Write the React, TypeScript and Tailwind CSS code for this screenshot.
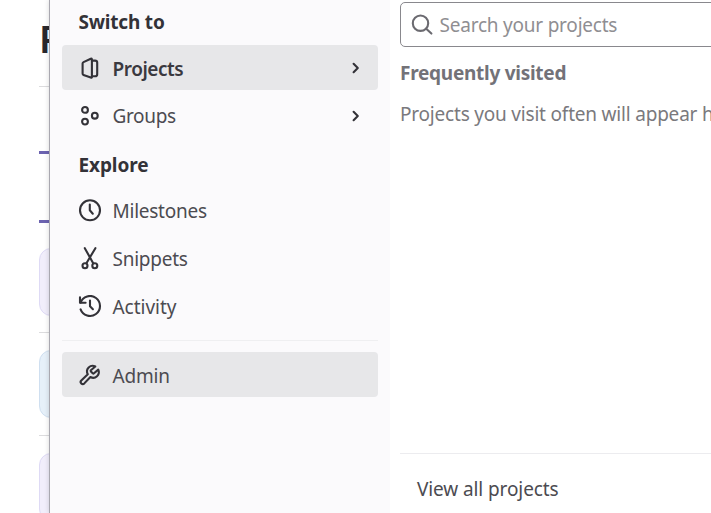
import React from 'react';
import clsx from 'clsx';

interface IconProps {
    children: React.ReactNode;
}

function Icon({ children }: IconProps) {
    return (
        <svg
            viewBox="0 0 24 24"
            className="size-6 shrink-0 text-[#333238]"
            fill="none"
            stroke="currentColor"
            strokeWidth="2.1"
            strokeLinecap="round"
            strokeLinejoin="round"
        >
            {children}
        </svg>
    );
}

const ProjectIcon = () => (
    <Icon>
        <path d="M4.6 7.5Q4.6 6.5 5.5 6.1L12.8 2.7Q13.9 2.3 13.9 3.4V20.9Q13.9 22 12.8 21.6L5.5 18.9Q4.6 18.6 4.6 17.6Z" />
        <path d="M13.9 4.6H17.1Q19.2 4.6 19.2 6.6V18.2Q19.2 20.3 17.1 20.3H13.9" />
    </Icon>
);

const GroupIcon = () => (
    <Icon>
        <circle cx="7" cy="5.9" r="2.9" />
        <circle cx="7" cy="17.6" r="2.9" />
        <circle cx="16.8" cy="11.7" r="2.9" />
    </Icon>
);

const ClockIcon = () => (
    <Icon>
        <circle cx="12" cy="11.3" r="10" />
        <path d="M11.8 5.5V11.3L14.8 14.7" />
    </Icon>
);

const SnippetIcon = () => (
    <Icon>
        <path d="M6.8 1.2L15.2 16.2M17.4 1.2L8.4 16.2" />
        <circle cx="7" cy="18.7" r="2.5" />
        <circle cx="16.8" cy="18.7" r="2.5" />
    </Icon>
);

const HistoryIcon = () => (
    <Icon>
        <path d="M2 2.2V7.8H7.6" />
        <path d="M2.6 7.6A10 10 0 1 1 2.6 14.4" />
        <path d="M12 5.6V11.3L14.9 14.2" />
    </Icon>
);

const AdminIcon = () => (
    <Icon>
        <path d="M12.9 7.2a1 1 0 0 0 0 1.3l1.8 1.8a1 1 0 0 0 1.3 0l4.3-3.7a5.7 5.7 0 0 1-7.9 7.4l-6.1 6.4a2.1 2.1 0 0 1-3-3l6.5-6.2a5.6 5.6 0 0 1 7.5-7.7z" />
    </Icon>
);

interface NavItemProps {
    label: string;
    icon: React.ReactNode;
    highlighted?: boolean;
    bold?: boolean;
    arrow?: boolean;
    className: string;
}

function NavItem({ label, icon, highlighted, bold, arrow, className }: NavItemProps) {
    return (
        <a
            className={clsx(
                'flex h-[45px] shrink-0 items-center rounded pl-4 pr-[14px]',
                highlighted && 'bg-[#e7e7e9]',
                bold ? 'font-semibold text-[#3a393f]' : 'text-[#4c4b51]'
            )}
        >
            {icon}
            <span className={clsx('ml-[10.5px] grow', highlighted ? 'pt-[3px]' : 'pt-px', className)}>{label}</span>
            {arrow && (
                <svg viewBox="0 0 16 16" className="size-4" fill="none" stroke="#333238" strokeWidth="2.1" strokeLinecap="round" strokeLinejoin="round">
                    <path d="M5.6 3.8L9.8 8L5.6 12.2" />
                </svg>
            )}
        </a>
    );
}

// Sliver of the page that stays visible beside the open menu
function PageEdge() {
    return (
        <div className="h-full w-[49px] shrink-0 overflow-hidden bg-white pl-[39px]">
            <div className="h-[86px] pt-[16px] text-[38px] leading-[44px] font-semibold text-[#28272d]">P</div>
            <div className="h-px bg-[#dcdcde]" />
            <div className="mt-16 h-[3px] bg-[#6c63b0]" />
            <div className="mt-[66px] h-[3px] bg-[#6c63b0]" />
            <div className="mt-[25px] h-[68px] w-10 rounded-xl border border-[#dedaf5] bg-[#f1eefb]" />
            <div className="mt-4 h-px bg-[#dcdcde]" />
            <div className="mt-[17px] h-[68px] w-10 rounded-xl border border-[#cfdff0] bg-[#e6f0f9]" />
            <div className="mt-[17px] h-px bg-[#dcdcde]" />
            <div className="mt-[17px] h-[68px] w-10 rounded-xl border border-[#dedaf5] bg-[#f1eefb]" />
        </div>
    );
}

function Sidebar() {
    return (
        <nav className="flex h-full w-[340px] shrink-0 flex-col bg-[#fbfafc] px-3">
            <h2 className="h-[45px] pt-[9px] pl-[16.5px] leading-[27px] font-bold tracking-[-0.2px] text-[#333238]">Switch to</h2>
            <NavItem label="Projects" icon={<ProjectIcon />} highlighted bold arrow className="tracking-[-0.45px]" />
            <div className="mt-[3px] flex flex-col">
                <NavItem label="Groups" icon={<GroupIcon />} arrow className="tracking-[-0.35px]" />
            </div>
            <h2 className="h-[50px] pt-[14px] pl-[16.5px] leading-[27px] font-bold tracking-[-0.1px] text-[#333238]">Explore</h2>
            <div className="flex flex-col gap-[3px]">
                <NavItem label="Milestones" icon={<ClockIcon />} className="tracking-[-0.25px]" />
                <NavItem label="Snippets" icon={<SnippetIcon />} className="tracking-[-0.25px]" />
                <NavItem label="Activity" icon={<HistoryIcon />} className="tracking-[-0.02px]" />
            </div>
            <hr className="mt-[11px] mb-[11px] border-[#efeff1]" />
            <NavItem label="Admin" icon={<AdminIcon />} highlighted className="tracking-[-0.2px]" />
        </nav>
    );
}

function ProjectsPane() {
    return (
        <section className="flex h-full grow flex-col overflow-hidden bg-white pl-[10px] whitespace-nowrap text-[#7a797d]">
            <div className="mt-[2px] flex h-[45px] w-[400px] shrink-0 items-center rounded-[5px] border-[1.5px] border-[#89888d] pl-[10px]">
                <svg viewBox="0 0 24 24" className="size-6 shrink-0 text-[#6b6a70]" fill="none" stroke="currentColor" strokeWidth="2.1" strokeLinecap="round">
                    <circle cx="9.5" cy="10.2" r="7.7" />
                    <path d="M15.2 15.7L20.4 20.6" />
                </svg>
                <span className="ml-[4.5px] pt-[2px] tracking-[-0.22px] text-[#8f8e92]">Search your projects</span>
            </div>
            <h3 className="mt-[13px] leading-[27px] font-bold tracking-[-0.27px] text-[#737278]">Frequently visited</h3>
            <p className="mt-[14px] leading-[27px] tracking-[-0.2px]">Projects you visit often will appear here</p>
            <div className="mt-auto h-[60px] shrink-0 border-t border-[#ececef] pt-[22px] pl-[17px] leading-[27px] tracking-[-0.1px] text-[#4c4b51]">
                View all projects
            </div>
        </section>
    );
}

export default function App() {
    return (
        <div className="flex h-screen w-screen overflow-hidden bg-white font-['Noto_Sans',sans-serif] text-[19px]">
            <PageEdge />
            <div className="flex h-full min-w-0 grow border-l border-[#a9a8b0] shadow-[0_0_5px_rgba(0,0,0,0.16)]">
                <Sidebar />
                <ProjectsPane />
            </div>
        </div>
    );
}
